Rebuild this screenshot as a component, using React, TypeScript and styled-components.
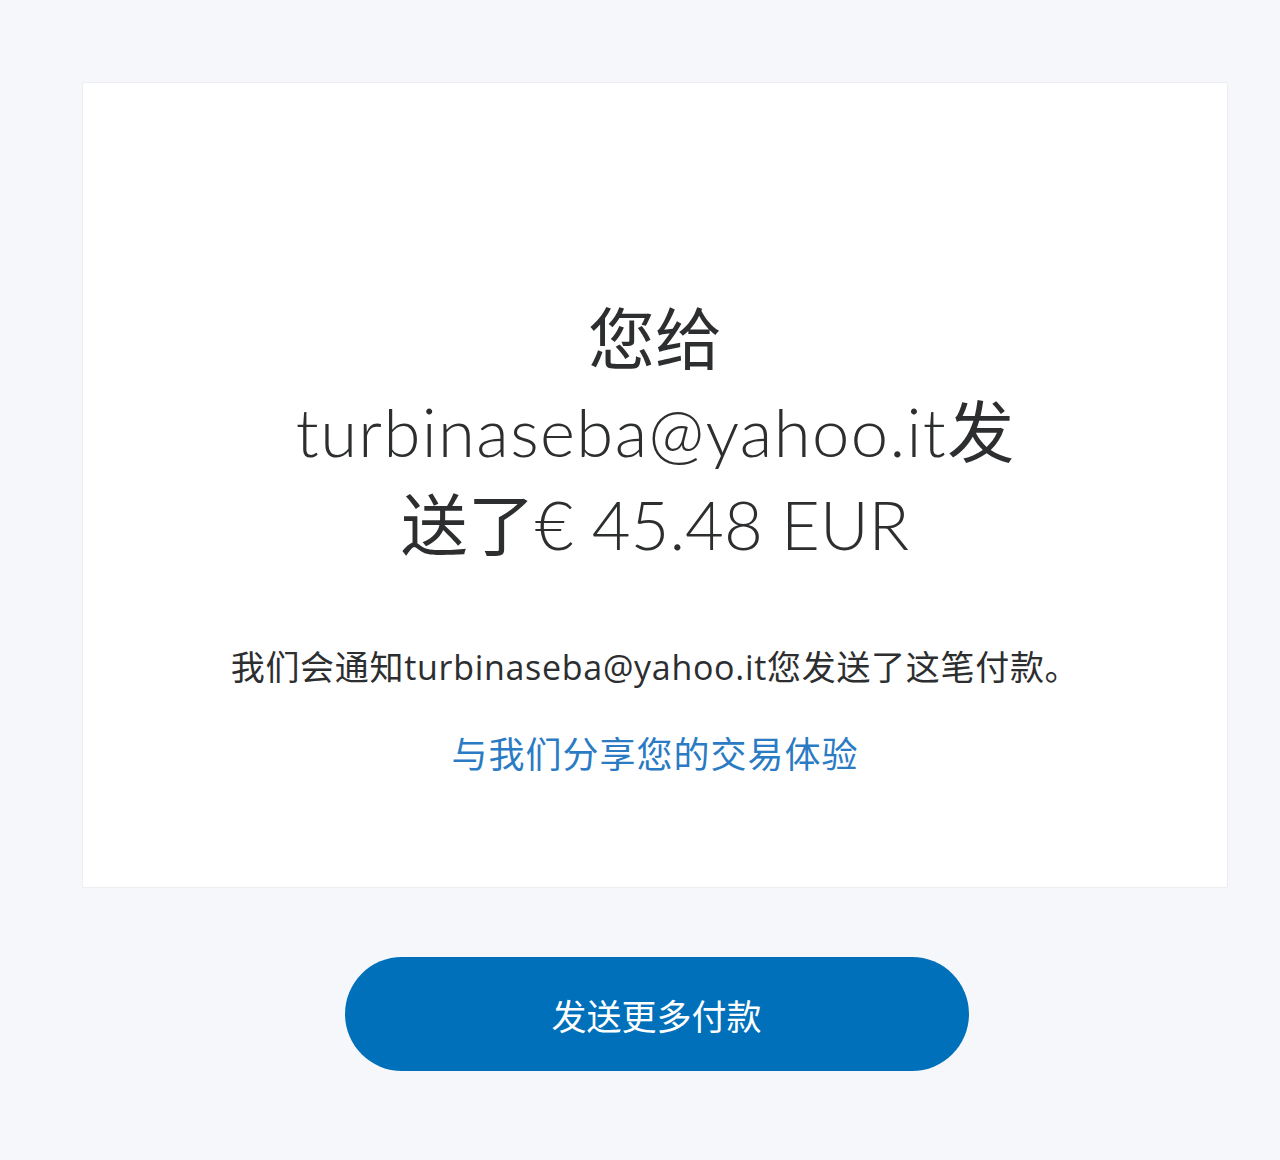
import React from "react";
import styled, { createGlobalStyle } from "styled-components";

const GlobalStyle = createGlobalStyle`
  html, body {
    margin: 0;
    padding: 0;
    background: #f5f7fa;
  }
  body {
    font-family: "Lato", "Noto Sans CJK SC", sans-serif;
    color: #2c2e2f;
  }
`;

const Page = styled.main`
  min-height: 1160px;
  box-sizing: border-box;
  padding: 82px 52px 0 82px;
  display: flex;
  flex-direction: column;
  align-items: center;
`;

const Card = styled.section`
  width: 100%;
  box-sizing: border-box;
  background: #ffffff;
  border: 1px solid #eceef1;
  border-radius: 2px;
  padding: 209px 40px 111px;
  display: flex;
  flex-direction: column;
  align-items: center;
  text-align: center;
`;

const Heading = styled.h1`
  margin: 0;
  max-width: 760px;
  font-family: "Lato", "Noto Sans CJK SC", sans-serif;
  font-weight: 300;
  font-size: 67px;
  line-height: 93px;
  color: #2c2e2f;
  letter-spacing: 1.4px;
`;

const Cjk = styled.span`
  font-family: "Noto Sans CJK SC", sans-serif;
  font-weight: 400;
  letter-spacing: 0;
  line-height: 1;
`;

const Amount = styled.span`
  letter-spacing: 0;
`;

const Message = styled.p`
  margin: 72px 0 0;
  font-family: "Open Sans", "Noto Sans CJK SC", sans-serif;
  font-weight: 400;
  font-size: 34px;
  line-height: 48px;
  color: #2c2e2f;
  letter-spacing: 0.7px;
`;

const FeedbackLink = styled.a`
  margin-top: 37px;
  font-family: "Noto Sans CJK SC", sans-serif;
  font-size: 36px;
  line-height: 48px;
  color: #2a7bc4;
  text-decoration: none;
  letter-spacing: 1px;
  cursor: pointer;
`;

const PrimaryButton = styled.button`
  margin-top: 69px;
  margin-left: 3px;
  width: 624px;
  height: 114px;
  border: none;
  border-radius: 57px;
  background: #0070ba;
  color: #ffffff;
  font-family: "Noto Sans CJK SC", sans-serif;
  font-size: 35px;
  font-weight: 400;
  cursor: pointer;
`;

export default function App() {
  return (
    <>
      <GlobalStyle />
      <Page>
        <Card>
          <Heading>
            <Cjk>您给</Cjk>turbinaseba@yahoo.it<Cjk>发送了</Cjk>
            <Amount>€ 45.48 EUR</Amount>
          </Heading>
          <Message>我们会通知turbinaseba@yahoo.it您发送了这笔付款。</Message>
          <FeedbackLink href="#">与我们分享您的交易体验</FeedbackLink>
        </Card>
        <PrimaryButton>发送更多付款</PrimaryButton>
      </Page>
    </>
  );
}
